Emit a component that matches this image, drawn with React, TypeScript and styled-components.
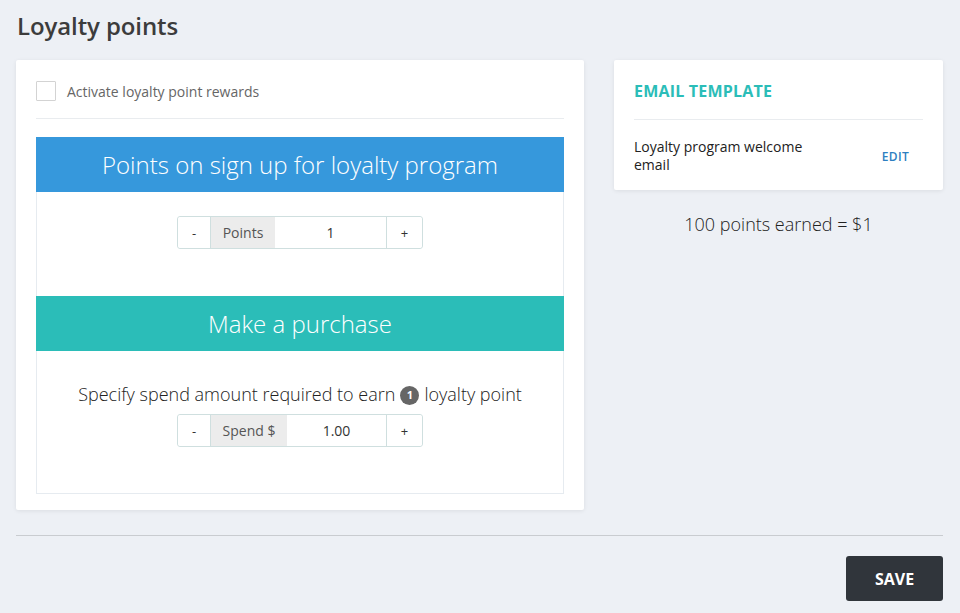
import React from "react";
import styled, { createGlobalStyle } from "styled-components";

const Global = createGlobalStyle`
  html, body { margin: 0; padding: 0; background: #edf0f5; }
  body { font-family: "Open Sans", "Liberation Sans", sans-serif; color: #333; }
  * { box-sizing: border-box; }
`;

const Page = styled.div`
  padding: 8px 17px 12px 16px;
  min-height: 613px;
`;

const Title = styled.h1`
  margin: 0 0 16px 1px;
  font-size: 24px;
  font-weight: 600;
  line-height: 36px;
  color: #3c3c3c;
  letter-spacing: -0.1px;
`;

const Columns = styled.div`
  display: flex;
  gap: 30px;
  align-items: flex-start;
`;

const Card = styled.div<{ $w: number }>`
  width: ${(p) => p.$w}px;
  background: #fff;
  border-radius: 2px;
  box-shadow: 0 1px 4px rgba(0, 0, 0, 0.08);
`;

const LeftCard = styled(Card)`
  padding: 20px 20px 16px 20px;
`;

const CheckRow = styled.label`
  display: flex;
  align-items: center;
  gap: 11px;
  padding: 1px 0 17px 0;
  border-bottom: 1px solid #e9ecef;
  margin-bottom: 18px;
  font-size: 14px;
  color: #666;
`;

const Box = styled.span`
  width: 20px;
  height: 20px;
  border: 1px solid #d3d3d3;
  border-radius: 1px;
  background: #fff;
`;

const SectionHead = styled.div<{ $bg: string }>`
  background: ${(p) => p.$bg};
  height: 55px;
  display: flex;
  align-items: center;
  justify-content: center;
  color: #fff;
  font-size: 24px;
  font-weight: 300;
`;

const SectionBody = styled.div<{ $h: number; $last?: boolean }>`
  height: ${(p) => p.$h}px;
  border-left: 1px solid #e6ebf0;
  border-right: 1px solid #e6ebf0;
  border-bottom: ${(p) => (p.$last ? "1px solid #e6ebf0" : "none")};
  display: flex;
  flex-direction: column;
  align-items: center;
  padding-top: ${(p) => (p.$last ? 29 : 24)}px;
`;

const Desc = styled.div`
  font-size: 18px;
  font-weight: 300;
  color: #222;
  display: flex;
  align-items: center;
  gap: 5px;
  line-height: 28px;
  margin-bottom: 6px;
`;

const Badge = styled.span`
  display: inline-flex;
  width: 19px;
  height: 19px;
  border-radius: 50%;
  background: #666;
  color: #fff;
  font-size: 11px;
  font-weight: 700;
  align-items: center;
  justify-content: center;
  margin-top: 2px;
`;

const Group = styled.div`
  display: flex;
  height: 33px;
  border: 1px solid #cfdfdf;
  border-radius: 3px;
  font-size: 14px;
`;

const StepBtn = styled.button<{ $w: number }>`
  width: ${(p) => p.$w}px;
  border: none;
  background: #fff;
  font-family: inherit;
  font-size: 13px;
  color: #333;
  padding: 0;
  border-radius: 3px;
  & + * { border-left: 1px solid #cfdfdf; }
`;

const Addon = styled.span<{ $w: number }>`
  width: ${(p) => p.$w}px;
  background: #ececec;
  color: #555;
  display: flex;
  align-items: center;
  justify-content: center;
  font-size: 14px;
`;

const Value = styled.span<{ $w: number }>`
  width: ${(p) => p.$w}px;
  display: flex;
  align-items: center;
  justify-content: center;
  color: #333;
  font-size: 14px;
  border-right: 1px solid #cfdfdf;
`;

const RightCol = styled.div`
  display: flex;
  flex-direction: column;
  align-items: center;
`;

const RightCard = styled(Card)`
  padding: 20px 20px 16px 20px;
`;

const CardHead = styled.div`
  font-size: 16px;
  font-weight: 700;
  color: #2bbdb8;
  letter-spacing: 0.2px;
  line-height: 22px;
  padding-bottom: 17px;
  border-bottom: 1px solid #e9ecef;
  margin-bottom: 18px;
`;

const TemplateRow = styled.div`
  display: flex;
  align-items: center;
  justify-content: space-between;
`;

const TemplateName = styled.div`
  font-size: 14px;
  line-height: 18px;
  color: #222;
  width: 190px;
`;

const EditLink = styled.a`
  font-size: 12px;
  font-weight: 600;
  color: #2d7fc1;
  letter-spacing: 0.3px;
  margin-right: 14px;
`;

const Rate = styled.div`
  margin-top: 22px;
  font-size: 18px;
  font-weight: 300;
  color: #222;
`;

const Footer = styled.div`
  margin-top: 25px;
  border-top: 1px solid #c9ccd0;
  padding-top: 20px;
  display: flex;
  justify-content: flex-end;
`;

const SaveBtn = styled.button`
  width: 97px;
  height: 45px;
  background: #30353b;
  color: #fff;
  border: none;
  border-radius: 3px;
  font-family: inherit;
  font-weight: 700;
  font-size: 16px;
`;

function Stepper({ label, labelW, value, valueW }: { label: string; labelW: number; value: string; valueW: number }) {
  return (
    <Group>
      <StepBtn $w={32}>-</StepBtn>
      <Addon $w={labelW}>{label}</Addon>
      <Value $w={valueW}>{value}</Value>
      <StepBtn $w={35}>+</StepBtn>
    </Group>
  );
}

export default function App() {
  return (
    <>
      <Global />
      <Page>
        <Title>Loyalty points</Title>
        <Columns>
          <LeftCard $w={568}>
            <CheckRow>
              <Box />
              Activate loyalty point rewards
            </CheckRow>
            <SectionHead $bg="#3698dc">Points on sign up for loyalty program</SectionHead>
            <SectionBody $h={104}>
              <Stepper label="Points" labelW={65} value="1" valueW={112} />
            </SectionBody>
            <SectionHead $bg="#2bbdb8">Make a purchase</SectionHead>
            <SectionBody $h={143} $last>
              <Desc>
                Specify spend amount required to earn <Badge>1</Badge> loyalty point
              </Desc>
              <Stepper label="Spend $" labelW={77} value="1.00" valueW={100} />
            </SectionBody>
          </LeftCard>
          <RightCol>
            <RightCard $w={329}>
              <CardHead>EMAIL TEMPLATE</CardHead>
              <TemplateRow>
                <TemplateName>Loyalty program welcome email</TemplateName>
                <EditLink>EDIT</EditLink>
              </TemplateRow>
            </RightCard>
            <Rate>100 points earned = $1</Rate>
          </RightCol>
        </Columns>
        <Footer>
          <SaveBtn>SAVE</SaveBtn>
        </Footer>
      </Page>
    </>
  );
}
